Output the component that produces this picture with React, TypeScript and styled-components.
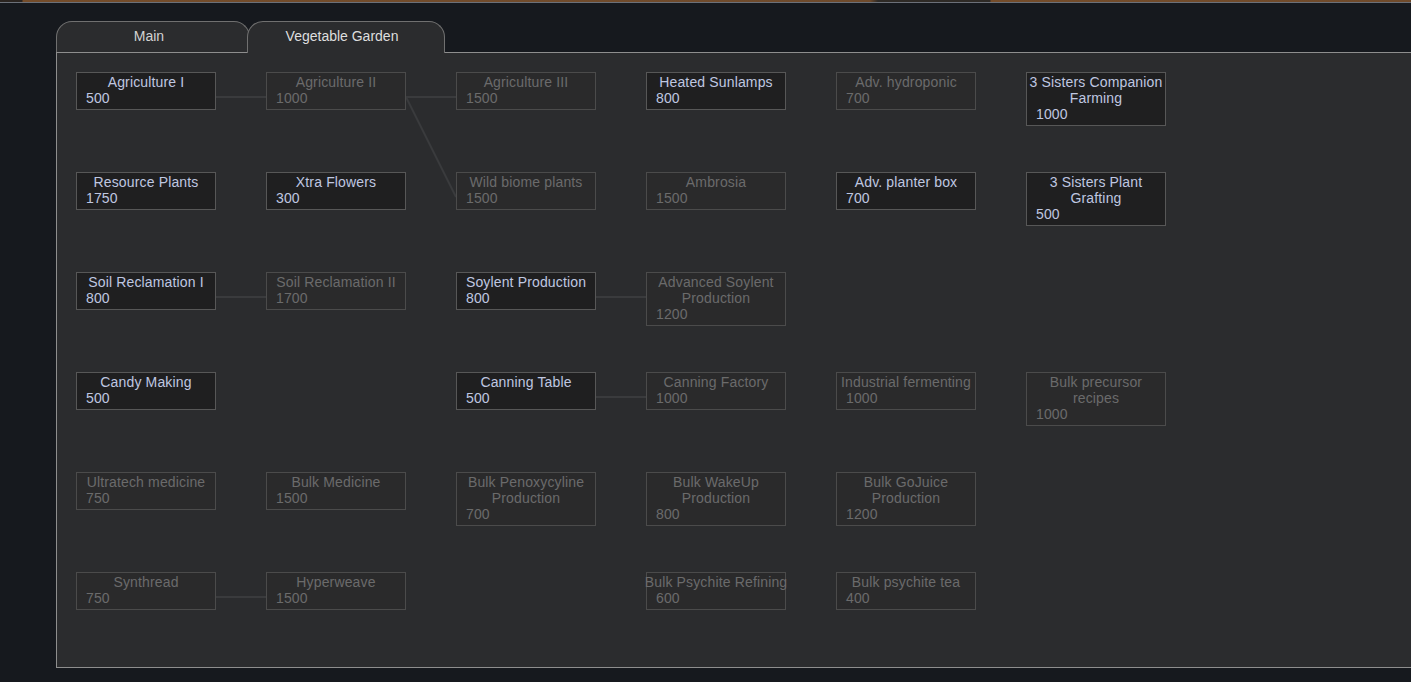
import { FC } from 'react'
import styled, { createGlobalStyle, css } from 'styled-components'

/**
 * Data
 */

interface ResearchNode {
  col: number
  row: number
  title: string
  cost: number
  unlocked?: boolean
  nowrap?: boolean
}

const NODES: ResearchNode[] = [
  { col: 0, row: 0, title: 'Agriculture I', cost: 500, unlocked: true },
  { col: 1, row: 0, title: 'Agriculture II', cost: 1000 },
  { col: 2, row: 0, title: 'Agriculture III', cost: 1500 },
  { col: 3, row: 0, title: 'Heated Sunlamps', cost: 800, unlocked: true },
  { col: 4, row: 0, title: 'Adv. hydroponic', cost: 700 },
  { col: 5, row: 0, title: '3 Sisters Companion Farming', cost: 1000, unlocked: true },
  { col: 0, row: 1, title: 'Resource Plants', cost: 1750, unlocked: true },
  { col: 1, row: 1, title: 'Xtra Flowers', cost: 300, unlocked: true },
  { col: 2, row: 1, title: 'Wild biome plants', cost: 1500 },
  { col: 3, row: 1, title: 'Ambrosia', cost: 1500 },
  { col: 4, row: 1, title: 'Adv. planter box', cost: 700, unlocked: true },
  { col: 5, row: 1, title: '3 Sisters Plant Grafting', cost: 500, unlocked: true },
  { col: 0, row: 2, title: 'Soil Reclamation I', cost: 800, unlocked: true },
  { col: 1, row: 2, title: 'Soil Reclamation II', cost: 1700 },
  { col: 2, row: 2, title: 'Soylent Production', cost: 800, unlocked: true },
  { col: 3, row: 2, title: 'Advanced Soylent Production', cost: 1200 },
  { col: 0, row: 3, title: 'Candy Making', cost: 500, unlocked: true },
  { col: 2, row: 3, title: 'Canning Table', cost: 500, unlocked: true },
  { col: 3, row: 3, title: 'Canning Factory', cost: 1000 },
  { col: 4, row: 3, title: 'Industrial fermenting', cost: 1000 },
  { col: 5, row: 3, title: 'Bulk precursor recipes', cost: 1000 },
  { col: 0, row: 4, title: 'Ultratech medicine', cost: 750 },
  { col: 1, row: 4, title: 'Bulk Medicine', cost: 1500 },
  { col: 2, row: 4, title: 'Bulk Penoxycyline Production', cost: 700 },
  { col: 3, row: 4, title: 'Bulk WakeUp Production', cost: 800 },
  { col: 4, row: 4, title: 'Bulk GoJuice Production', cost: 1200 },
  { col: 0, row: 5, title: 'Synthread', cost: 750 },
  { col: 1, row: 5, title: 'Hyperweave', cost: 1500 },
  { col: 3, row: 5, title: 'Bulk Psychite Refining', cost: 600, nowrap: true },
  { col: 4, row: 5, title: 'Bulk psychite tea', cost: 400 }
]

// [fromCol, fromRow, toCol, toRow]
const LINKS: [number, number, number, number][] = [
  [0, 0, 1, 0],
  [1, 0, 2, 0],
  [1, 0, 2, 1],
  [0, 2, 1, 2],
  [2, 2, 3, 2],
  [2, 3, 3, 3],
  [0, 5, 1, 5]
]

const NODE_W = 140
const COL_STEP = 190
const ROW_STEP = 100
const LINK_Y = 25

/**
 * Components
 */

const TechNode: FC<{ node: ResearchNode }> = ({ node }) => (
  <StyledNode
    $unlocked={!!node.unlocked}
    style={{ gridColumn: node.col + 1, gridRow: node.row + 1 }}
  >
    <StyledNodeTitle $nowrap={!!node.nowrap}>{node.title}</StyledNodeTitle>
    <StyledNodeCost>{node.cost}</StyledNodeCost>
  </StyledNode>
)

const Links: FC = () => (
  <StyledLinks>
    {LINKS.map(([fc, fr, tc, tr]) => (
      <line
        key={`${fc}-${fr}-${tc}-${tr}`}
        x1={fc * COL_STEP + NODE_W}
        y1={fr * ROW_STEP + LINK_Y}
        x2={tc * COL_STEP}
        y2={tr * ROW_STEP + LINK_Y}
        stroke="#3a3b3d"
        strokeWidth={2}
      />
    ))}
  </StyledLinks>
)

export default function App() {
  return (
    <>
      <GlobalStyle />
      <StyledTopStrip />
      <StyledScreen>
        <StyledTabBar>
          <StyledTab>Main</StyledTab>
          <StyledTab $active>Vegetable Garden</StyledTab>
        </StyledTabBar>
        <StyledPanel>
          <StyledTree>
            <Links />
            {NODES.map(n => (
              <TechNode key={n.title} node={n} />
            ))}
          </StyledTree>
        </StyledPanel>
      </StyledScreen>
    </>
  )
}

/**
 * Styled Component
 */

const GlobalStyle = createGlobalStyle`
  html, body {
    margin: 0;
    padding: 0;
    background: #16191e;
    overflow: hidden;
  }
  body {
    font-family: "Liberation Sans", Arial, sans-serif;
    font-size: 14px;
  }
`

const StyledTopStrip = styled.div`
  height: 2px;
  border-bottom: 1px solid #6b7079;
  background: linear-gradient(
    90deg,
    #2a2420 0,
    #2a2420 22px,
    #744c2a 23px,
    #6e4a2c 870px,
    #2e2a26 878px,
    #2e2a26 990px,
    #744c2a 991px,
    #6f4a2b 100%
  );
`

const StyledScreen = styled.div`
  padding: 18px 0 0 56px;
`

const StyledTabBar = styled.div`
  display: flex;
  align-items: flex-end;
  height: 31px;
`

const StyledTab = styled.div<{ $active?: boolean }>`
  box-sizing: border-box;
  height: 31px;
  width: 194px;
  padding: 0 8px 2px 0;
  display: flex;
  align-items: center;
  justify-content: center;
  background: #2b2c2e;
  border: 1px solid #707070;
  border-bottom: none;
  border-radius: 16px 16px 0 0;
  color: #d2d2d2;
  font-size: 14px;
  ${({ $active }) =>
    $active &&
    css`
      position: relative;
      z-index: 1;
      width: 198px;
      height: 32px;
      padding-bottom: 3px;
      margin-left: -3px;
      margin-bottom: -1px;
      color: #dedede;
    `}
`

const StyledPanel = styled.div`
  box-sizing: border-box;
  height: 616px;
  padding: 19px;
  background: #2b2c2e;
  border: 1px solid #8e8e8e;
  border-right: none;
`

const StyledTree = styled.div`
  position: relative;
  display: grid;
  grid-template-columns: repeat(6, ${NODE_W}px);
  grid-auto-rows: 54px;
  column-gap: ${COL_STEP - NODE_W}px;
  row-gap: ${ROW_STEP - 54}px;
  align-items: start;
`

const StyledLinks = styled.svg`
  position: absolute;
  left: 0;
  top: 0;
  width: 100%;
  height: 100%;
  overflow: visible;
  pointer-events: none;
`

const StyledNode = styled.div<{ $unlocked: boolean }>`
  position: relative;
  box-sizing: border-box;
  width: ${NODE_W}px;
  padding: 1px 0 3px;
  line-height: 16px;
  letter-spacing: 0.15px;
  ${({ $unlocked }) =>
    $unlocked
      ? css`
          background: #1f1f20;
          border: 1px solid #575757;
          color: #bfc7e0;
        `
      : css`
          background: #2a2a2b;
          border: 1px solid #4b4b4b;
          color: #6b6b6b;
        `}
`

const StyledNodeTitle = styled.div<{ $nowrap: boolean }>`
  text-align: center;
  ${({ $nowrap }) =>
    $nowrap &&
    css`
      white-space: nowrap;
      margin: 0 -3px;
    `}
`

const StyledNodeCost = styled.div`
  padding-left: 9px;
`
